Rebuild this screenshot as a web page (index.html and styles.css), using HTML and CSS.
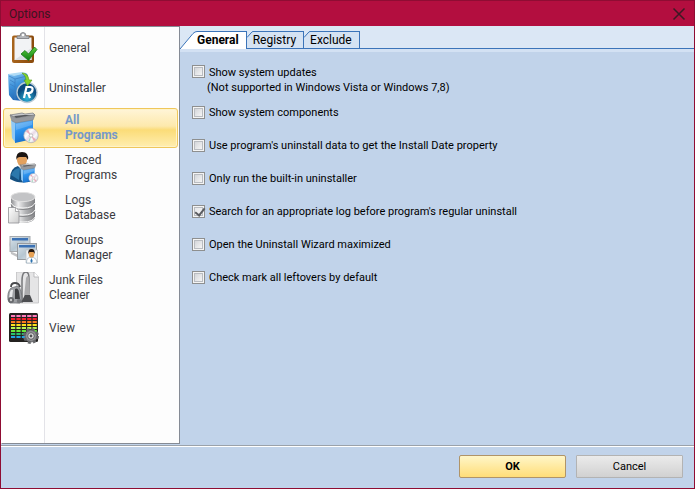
FILE: index.html
```html
<!DOCTYPE html>
<html lang="en">
<head>
<meta charset="utf-8">
<title>Options</title>
<link rel="stylesheet" href="styles.css">
</head>
<body>
<div class="window">
  <header class="titlebar">
    <h1 class="title">Options</h1>
    <button class="close" type="button" aria-label="Close">
      <svg width="14" height="14" viewBox="0 0 14 14"><path d="M1.5 1.5l11 11M12.5 1.5l-11 11" stroke="#3c1a24" stroke-width="1.5" fill="none"/></svg>
    </button>
  </header>

  <div class="content">
    <nav class="sidebar">
      <a class="item" href="#general">
        <svg class="icon" viewBox="0 0 32 32">
          <defs><linearGradient id="wood" x2="1"><stop stop-color="#a8641c"/><stop offset="1" stop-color="#8a4a0c"/></linearGradient>
          <linearGradient id="tick" x2="0" y2="1"><stop stop-color="#5cd03c"/><stop offset="1" stop-color="#0c7a12"/></linearGradient></defs>
          <rect x="5" y="3.500" width="22" height="27.500" rx="2" fill="url(#wood)"/>
          <path d="M7.500 5.500h17v22.500h-17z" fill="#f2f3f5"/><path d="M7.500 28l17-12v12z" fill="#dcdee2"/>
          <path d="M10 6.500V4h3a3 3.500 0 0 1 6 0h3v2.500z" fill="#b4b6ba" stroke="#77797e" stroke-width=".8"/><circle cx="16" cy="3" r="1.200" fill="#fff"/>
          <path d="M14 22l4-3.500 3.500 3.500 6-7 2.500 2.500-8.500 11z" fill="url(#tick)" stroke="#187718" stroke-width=".8"/>
        </svg>
        <span class="label">General</span>
      </a>
      <a class="item" href="#uninstaller">
        <svg class="icon" viewBox="0 0 32 32">
          <defs><linearGradient id="blue" x2=".3" y2="1"><stop stop-color="#8cc8f4"/><stop offset=".5" stop-color="#3c92da"/><stop offset="1" stop-color="#2468b4"/></linearGradient>
          <radialGradient id="ball" cy=".8"><stop stop-color="#2cb4d8"/><stop offset="1" stop-color="#0c4c80"/></radialGradient></defs>
          <path d="M1 2l6 1 12-2 2 2v5l-5 21-10-1-4-5z" fill="url(#blue)"/>
          <path d="M2 4l6 3 12-3M8 7v21M3 8l5 3M3 12l5 3M3 17l5 3" stroke="#3c80c4" stroke-width=".8" fill="none"/>
          <path d="M1 2l6 2 12-3-4-1z" fill="#b0dcf6"/>
          <circle cx="20" cy="20.500" r="10" fill="url(#ball)" stroke="#bacbd6" stroke-width="1.300"/>
          <path d="M17 26l2.500-11h3.500q3 0 2.500 3t-4 3h-3M21 21l2 5" stroke="#fff" stroke-width="2.200" fill="none"/>
          <path d="M15 1q6 0 7 7h3l-4.500 6L17 8h2q0-4-4-7z" fill="#86d42c" stroke="#559a14" stroke-width=".6"/>
        </svg>
        <span class="label">Uninstaller</span>
      </a>
      <a class="item sub selected" href="#all-programs" aria-current="page">
        <svg class="icon" viewBox="0 0 32 32">
          <defs><linearGradient id="box" x2=".3" y2="1"><stop stop-color="#6cb8f6"/><stop offset=".5" stop-color="#2c92ee"/><stop offset="1" stop-color="#1670cc"/></linearGradient>
          <linearGradient id="disc" x2="1" y2="1"><stop stop-color="#c2c5d8"/><stop offset=".35" stop-color="#fff"/><stop offset=".5" stop-color="#e8d8e6"/><stop offset=".65" stop-color="#fafafa"/><stop offset="1" stop-color="#bdbcc8"/></linearGradient>
          <g id="software"><path d="M4 8l4 1v21l-3-4z" fill="#8fc8f5"/><path d="M8 8h18v19L8 31z" fill="url(#box)"/>
          <path d="M3 3l6 3 19-3-2-2-8 1-3-1z" fill="#c8c9cb" stroke="#77797c" stroke-width=".7"/><path d="M3 3l2 6 4 2 17-3 2-5-19 3z" fill="#97999d" stroke="#77797c" stroke-width=".5"/><path d="M7 4l10-1 8 0-16 3z" fill="#56585c"/>
          <path d="M9 12l16-3v4L9 18z" fill="#fff" opacity=".18"/>
          <circle cx="24" cy="23.500" r="7.200" fill="url(#disc)" stroke="#aaa9b4" stroke-width=".7"/><path d="M24 23.500l-5-4 2-2zM24 23.500l5 4-2 2z" fill="#e9a9b8"/><path d="M24 23.500l-1 6h-2z" fill="#a2ddc0"/><circle cx="24" cy="23.500" r="1.700" fill="#fff" stroke="#aaa" stroke-width=".7"/></g></defs>
          <use href="#software"/>
        </svg>
        <span class="label">All<br>Programs</span>
      </a>
      <a class="item sub" href="#traced">
        <svg class="icon" viewBox="0 0 32 32">
          <path d="M3 27q0-11 8-13l5 3 6-2 3 3v11q-12 4-22-2z" fill="#155080"/><path d="M4 23q3-7 9-7l-1 12" fill="#2c78ac"/>
          <ellipse cx="15" cy="8" rx="5" ry="6.500" fill="#e3a15e"/><path d="M9.500 8q-1-8 5.500-8 7 0 6 8l-2-3-6 0q-3 0-3.500 3z" fill="#1b1512"/>
          <path d="M11 14l4 4 3-3z" fill="#eee"/>
          <g transform="translate(11 11) scale(.64)"><use href="#software"/></g>
        </svg>
        <span class="label">Traced<br>Programs</span>
      </a>
      <a class="item sub" href="#logs">
        <svg class="icon" viewBox="0 0 32 32">
          <defs><linearGradient id="steel" x2="1"><stop stop-color="#8d8e91"/><stop offset=".3" stop-color="#eeeeef"/><stop offset=".6" stop-color="#b4b5b7"/><stop offset="1" stop-color="#828386"/></linearGradient>
          <linearGradient id="paper" x2="1" y2="1"><stop stop-color="#fff"/><stop offset="1" stop-color="#ccc"/></linearGradient></defs>
          <path d="M4 5v21q2 5 12 5t12-5V5z" fill="url(#steel)"/>
          <ellipse cx="16" cy="5" rx="12" ry="4.600" fill="#c3c4c6" stroke="#e0e0e0"/>
          <path d="M4 11q2 5 12 5t12-5M4 18q2 5 12 5t12-5M4 25q2 5 12 5t12-5" stroke="#f7f7f7" stroke-width="1" fill="none"/>
          <path d="M4 12.500q2 5 12 5t12-5M4 19.500q2 5 12 5t12-5" stroke="#77787b" stroke-width=".8" fill="none"/>
          <path d="M1.500 15.500h7l3.500 4v11.500H1.500z" fill="url(#paper)" stroke="#909194" stroke-width=".8"/><path d="M8.500 15.500v4H12" fill="#fff" stroke="#909194" stroke-width=".7"/>
        </svg>
        <span class="label">Logs<br>Database</span>
      </a>
      <a class="item sub" href="#groups">
        <svg class="icon" viewBox="0 0 32 32">
          <defs><linearGradient id="pane" x2="1" y2="1"><stop stop-color="#dbe4ea"/><stop offset=".5" stop-color="#b6c6d1"/><stop offset="1" stop-color="#e7eef2"/></linearGradient></defs>
          <path d="M2 9l2 13 8 4v-3L5 20z" fill="#c1c2c4"/>
          <rect x="3" y="4.500" width="20" height="15" fill="url(#pane)" stroke="#a7abaf"/><path d="M5 6h16v2.500H5z" fill="#3c72b5"/>
          <rect x="10.500" y="11.500" width="19" height="16" fill="url(#pane)" stroke="#989ca0"/><path d="M12 13h16v2.500H12z" fill="#3c72b5"/>
          <path d="M19 18h11.500v13H19z" fill="#f2f5f7" stroke="#bac0c4" stroke-width=".7"/>
          <path d="M19.500 31q0-5 3-5.500h4q3.500 1 3.500 5.500z" fill="#fff" stroke="#8aa1b2" stroke-width=".6"/><path d="M24.500 26l1.200 3-1.200 2-1.200-2z" fill="#276fae"/>
          <ellipse cx="24.500" cy="22" rx="2.800" ry="3.600" fill="#e7a255"/><path d="M21.300 22q-.5-5 3.200-5t3.200 5l-1.200-2h-4z" fill="#24170f"/>
        </svg>
        <span class="label">Groups<br>Manager</span>
      </a>
      <a class="item" href="#junk">
        <svg class="icon" viewBox="0 0 32 32">
          <path d="M9.500 0H27l4.500 5v26h-22z" fill="#e5e5e6" stroke="#c0c0c2" stroke-width=".8"/><path d="M27 0v5h4.500" fill="#fff" stroke="#b0b0b2" stroke-width=".8"/>
          <path d="M15 31V9q0-9 4-9 3 0 3 7v15" fill="none" stroke="#77787b" stroke-width="1.500"/>
          <path d="M17 25l2-19q2-4 3 0l1 19z" fill="#ababad"/><path d="M14 30l4-7h5l3 7z" fill="#4d4e51"/>
          <path d="M1 28q-1-8 3-12l7-2q4 4 4 14l-2 3H3z" fill="#9d9fa3" stroke="#707276" stroke-width=".8"/>
          <path d="M4 15q0-4 4-4t5 4" fill="none" stroke="#494a4d" stroke-width="1.800"/>
          <path d="M8 17q3-2 4 3l1 7H8z" fill="#3d3e41"/><path d="M3 20q1-3 3-2l-1 8H2z" fill="#e8e9eb"/><circle cx="4" cy="28" r="3" fill="#66686c"/><circle cx="4" cy="28" r="1.200" fill="#ccc"/><circle cx="12" cy="29" r="2.200" fill="#77797d"/>
        </svg>
        <span class="label">Junk Files<br>Cleaner</span>
      </a>
      <a class="item" href="#view">
        <svg class="icon" viewBox="0 0 32 32">
          <rect x="2" y="1" width="29" height="29" rx="1.500" fill="#242220"/>
          <g fill="none" stroke-width="2" stroke-dasharray="4.200 1.200">
            <path d="M4 4h26" stroke="#ff7cbc"/><path d="M4 7h26" stroke="#f5202c"/><path d="M4 10h26" stroke="#fb7c1c"/><path d="M4 13h26" stroke="#ffe21c"/><path d="M4 16h26" stroke="#baf850"/><path d="M4 19h26" stroke="#62e83c"/><path d="M4 22h26" stroke="#28c46c"/><path d="M4 25h26" stroke="#20a4e4"/>
          </g>
          <circle cx="24" cy="24" r="6.500" fill="#77777a" stroke="#66676a" stroke-width="3" stroke-dasharray="2.800 2.300"/>
          <circle cx="24" cy="24" r="5" fill="#929396"/><circle cx="24" cy="24" r="3.300" fill="#ddd" stroke="#606164"/><circle cx="24" cy="24" r="1.400" fill="#505154"/>
        </svg>
        <span class="label">View</span>
      </a>
    </nav>

    <main class="panel">
      <div class="tabs" role="tablist">
        <button class="tab active" type="button" role="tab" aria-selected="true">
          <svg class="slant" width="17" height="18" viewBox="0 0 17 18"><path d="M0 18L13 2.500Q15 .5 17 .5V18z" fill="#fff"/><path d="M0 18L13 2.500Q15 .5 17 .5" fill="none" stroke="#3b74b9"/></svg>
          <span class="tab-text">General</span>
        </button>
        <button class="tab" type="button" role="tab" aria-selected="false">
          <svg class="slant" width="6" height="17" viewBox="0 0 6 17"><path d="M0 6.500L4 2Q5 .5 6 .5V17H0z" fill="#d5e3f3"/><path d="M0 6.500L4 2Q5 .5 6 .5" fill="none" stroke="#3b74b9"/></svg>
          <span class="tab-text">Registry</span>
        </button>
        <button class="tab" type="button" role="tab" aria-selected="false">
          <svg class="slant" width="6" height="17" viewBox="0 0 6 17"><path d="M0 6.500L4 2Q5 .5 6 .5V17H0z" fill="#d5e3f3"/><path d="M0 6.500L4 2Q5 .5 6 .5" fill="none" stroke="#3b74b9"/></svg>
          <span class="tab-text">Exclude</span>
        </button>
      </div>
      <form class="options">
        <label class="option first"><input type="checkbox"><span>Show system updates<br><span class="note">(Not supported in Windows Vista or Windows 7,8)</span></span></label>
        <label class="option"><input type="checkbox"><span>Show system components</span></label>
        <label class="option"><input type="checkbox"><span>Use program's uninstall data to get the Install Date property</span></label>
        <label class="option"><input type="checkbox"><span>Only run the built-in uninstaller</span></label>
        <label class="option"><input type="checkbox" checked><span>Search for an appropriate log before program's regular uninstall</span></label>
        <label class="option"><input type="checkbox"><span>Open the Uninstall Wizard maximized</span></label>
        <label class="option"><input type="checkbox"><span>Check mark all leftovers by default</span></label>
      </form>
    </main>
  </div>

  <footer class="footer">
    <button class="btn primary" type="button">OK</button>
    <button class="btn" type="button">Cancel</button>
  </footer>
</div>
</body>
</html>
```
FILE: styles.css
```css
* {
  box-sizing: border-box;
}

body {
  margin: 0;
  font-family: Roboto, "Open Sans", sans-serif;
  font-size: 11px;
  color: #000;
}

.window {
  display: flex;
  flex-direction: column;
  min-height: 100vh;
  border: 1px solid #8f0c33;
  background: #c1d3ea;
}

.titlebar {
  display: flex;
  align-items: center;
  justify-content: space-between;
  height: 25px;
  padding: 0 8px;
  background: #b30e3f;
}

.title {
  margin: 0;
  font: 12px/16px Roboto, "Open Sans", sans-serif;
  color: #3c1420;
}

.close {
  display: flex;
  padding: 0;
  border: 0;
  background: none;
}

.content {
  display: flex;
  flex: 1;
}

.sidebar {
  width: 179px;
  padding: 1px;
  border: 1px solid #858b95;
  border-left-color: #fff;
  background: linear-gradient(90deg, #fff 42px, #e3e3e8 42px, #e3e3e8 43px, #fdfdfd 43px);
}

.item {
  display: flex;
  align-items: center;
  height: 40px;
  padding-left: 4px;
  font: 12px/15px Roboto, "Open Sans", sans-serif;
  color: #3a3a3f;
  text-decoration: none;
}

.icon {
  flex: none;
  width: 32px;
  height: 32px;
}

.label {
  margin-left: 10px;
}

.sub .label {
  margin-left: 26px;
}

.selected {
  padding-left: 3px;
  border: 1px solid #efc75b;
  border-radius: 3px;
  background: linear-gradient(#fff5d8, #fde9ac 45%, #fbdc78 55%, #ffeeb0);
  box-shadow: inset 0 0 0 1px #fff3c8;
  font-weight: 700;
  color: #7699c9;
}

.panel {
  flex: 1;
  min-width: 0;
}

.tabs {
  display: flex;
  align-items: flex-end;
  height: 26px;
  padding-top: 5px;
  border-bottom: 3px solid #d3e1f3;
  background: linear-gradient(#dbe7f5, #dbe7f5) top / 100% 22px no-repeat, #3b74b9;
}

.tab {
  display: flex;
  align-items: flex-start;
  height: 18px;
  padding: 0;
  border: 0;
  background: none;
  font: 12px/16px Roboto, "Open Sans", sans-serif;
  color: #000;
}

.slant {
  flex: none;
}

.tab-text {
  height: 17px;
  padding-right: 7px;
  border: solid #3b74b9;
  border-width: 1px 1px 0 0;
  background: #d5e3f3;
}

.active {
  font-weight: 700;
}

.active .tab-text {
  height: 18px;
  background: #fff;
}

.options {
  display: flex;
  flex-direction: column;
  padding: 13px 12px;
}

.option {
  display: flex;
  align-items: center;
  gap: 4px;
  height: 33px;
  line-height: 15px;
}

.first {
  align-items: flex-start;
  height: 31px;
}

.note {
  margin-left: -2px;
}

.option input {
  appearance: none;
  flex: none;
  width: 13px;
  height: 13px;
  margin: 0;
  border: 1px solid #8e8f8f;
  background: linear-gradient(135deg, #d4d6da, #f5f5f5) center / 7px 7px no-repeat, #f4f4f4;
  box-shadow: inset 0 0 0 1px #f4f4f4, inset 0 0 0 2px #b9bcc1;
}

.option input:checked {
  background: linear-gradient(135deg, #e4e5e8, #f5f5f5);
}

.option input:checked::before {
  content: "";
  display: block;
  width: 4px;
  height: 8px;
  margin: 0 0 0 4px;
  border: solid #5b5c60;
  border-width: 0 2px 2px 0;
  transform: rotate(38deg);
}

.footer {
  display: flex;
  justify-content: flex-end;
  gap: 10px;
  margin-top: 1px;
  padding: 9px 11px 10px;
  border-top: 1px solid #9ba2aa;
  box-shadow: inset 0 1px #fff;
}

.btn {
  width: 107px;
  height: 23px;
  padding: 0;
  border: 1px solid #b3b3b3;
  border-radius: 1px;
  background: linear-gradient(#ebebeb, #d1d1d1);
  font: 11px Roboto, "Open Sans", sans-serif;
  color: #000;
}

.primary {
  border-color: #b09468;
  border-radius: 2px;
  background: linear-gradient(#fff6c8, #ffdd78);
  font-weight: 700;
}
```
